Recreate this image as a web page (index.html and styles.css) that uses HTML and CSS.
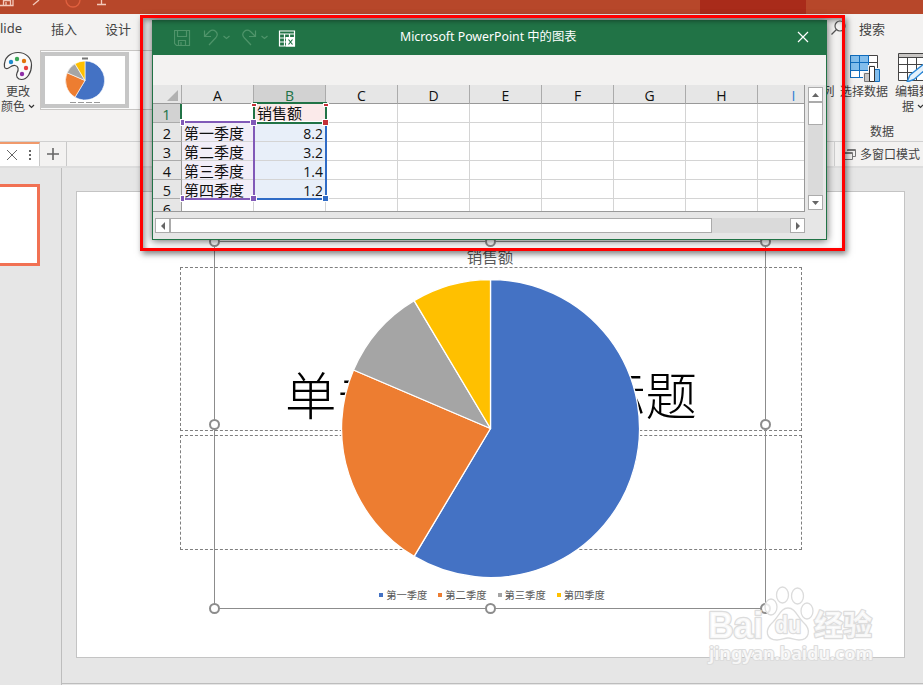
FILE: index.html
```html
<!DOCTYPE html>
<html lang="zh-CN">
<head>
    <meta charset="UTF-8">
    <meta name="viewport" content="width=device-width, initial-scale=1.0">
    <title>PowerPoint</title>
    <link rel="stylesheet" href="styles.css">
</head>
<body>

<div class="app">
    <header class="titlebar">
        <svg class="quick-icons" width="120" height="14" fill="none" stroke="#f3c9bb" stroke-width="1.3">
            <path d="M0 5.500H13V0M3.500 5V0.500H10.500V5M6 5V2"/>
            <path d="M33 5L39 0"/>
            <path d="M66 0A7 7 0 0 0 80 0" stroke="#e0603f"/>
            <path d="M97 4.500H106M101.500 0V4"/>
        </svg>
        <div class="tool-tab"></div>
    </header>

    <nav class="tabs">
        <span class="tab tab-slide">lide</span>
        <span class="tab">插入</span>
        <span class="tab">设计</span>
        <div class="search">
            <svg width="16" height="16" fill="none" stroke="#555" stroke-width="1.2"><circle cx="9" cy="6" r="5"/><path d="M5.500 9.500L0.500 14.500"/></svg>
            <span>搜索</span>
        </div>
    </nav>

    <section class="ribbon">
        <div class="tool tool-color">
            <svg width="30" height="30" viewBox="0 0 30 30">
                <path d="M1.500 16C0.500 6 8 1.500 15 1.500C23 1.500 28.500 7 28.500 14C28.500 22 24 28.500 18.500 28.500C14.500 28.500 12.500 25 14 22C16 18.500 15.500 15 12 14.500C8 14 7 17 4.500 17.500C3 17.700 1.700 17.300 1.500 16Z" fill="#fafafa" stroke="#444" stroke-width="1.2"/>
                <circle cx="8" cy="11" r="2.200" fill="#1e8bcd"/>
                <circle cx="14" cy="8" r="2.200" fill="#3aa655"/>
                <circle cx="21" cy="10" r="2.200" fill="#e2740c"/>
                <circle cx="23" cy="17" r="2.200" fill="#e84040"/>
                <circle cx="19" cy="23" r="2.200" fill="#9030a8"/>
            </svg>
            <span>更改</span>
            <span>颜色 <svg class="caret" width="7" height="5"><path d="M1 1L3.500 3.500L6 1" fill="none" stroke="#333" stroke-width="1.200"/></svg></span>
        </div>
        <div class="gallery">
            <div class="thumb">
                <svg width="80" height="49" viewBox="0 0 80 49">
                    <path d="M37 2.500H43" stroke="#777" stroke-width="2"/>
                    <g stroke="#fff" stroke-width="0.600">
                        <path d="M40 24.500V5A19.500 19.500 0 1 1 30 41.200Z" fill="#4472c4"/>
                        <path d="M40 24.500L30 41.200A19.500 19.500 0 0 1 22.100 16.800Z" fill="#ed7d31"/>
                        <path d="M40 24.500L22.100 16.800A19.500 19.500 0 0 1 30 7.800Z" fill="#a5a5a5"/>
                        <path d="M40 24.500L30 7.800A19.500 19.500 0 0 1 40 5Z" fill="#ffc000"/>
                    </g>
                    <path d="M25 46.500H55" stroke="#999" stroke-dasharray="6 2"/>
                </svg>
            </div>
        </div>
        <div class="data-group">
            <div class="data-tools">
                <div class="tool tool-row"><span>列</span></div>
                <div class="tool tool-select">
                    <svg width="30" height="29" viewBox="0 0 30 29">
                        <path d="M0.500 1.500H27.500V23.500H0.500Z" fill="#fff" stroke="#444"/>
                        <path d="M0.500 1.500H18.500V16.500H0.500Z" fill="#83beec"/>
                        <path d="M18.500 8.500H27.500M18.500 16.500H27.500" stroke="#444"/>
                        <path d="M0.500 23.500V1.500H18.500V16.500H0.500M9.500 1.500V23.500M0.500 8.500H18.500M0.500 23.500H14" fill="none" stroke="#0f6cbd"/>
                        <path d="M13 18H18V11H25V14H30V29H13Z" fill="#f3f2f1"/>
                        <path d="M14.500 19.500H19.500V27.500H14.500Z" fill="#c8c6c4" stroke="#777"/>
                        <path d="M24.500 15.500H29.500V27.500H24.500Z" fill="#83beec" stroke="#0f6cbd"/>
                        <path d="M19.500 12.500H24.500V27.500H19.500Z" fill="#fff" stroke="#333"/>
                    </svg>
                    <span>选择数据</span>
                </div>
                <div class="tool tool-edit">
                    <svg width="30" height="30" viewBox="0 0 30 30">
                        <path d="M0.500 1.500H31V28.500H0.500Z" fill="#fff" stroke="#444"/>
                        <path d="M1 2H31V5H1Z" fill="#c8c6c4"/>
                        <path d="M0 5.500H31M0 12.500H31M0 20.500H31M9.500 5V28M18.500 5V28" stroke="#444"/>
                        <path d="M32 7L12 23L9 30L16 27.500L35 11Z" fill="#e4f1fb" stroke="#2b88d8" stroke-width="1.400"/>
                    </svg>
                    <span>编辑数</span>
                    <span>据 <svg class="caret" width="7" height="5"><path d="M1 1L3.500 3.500L6 1" fill="none" stroke="#333" stroke-width="1.200"/></svg></span>
                </div>
            </div>
            <div class="group-label">数据</div>
        </div>
    </section>

    <div class="doc-tabs">
        <div class="doc-tab active">
            <svg width="34" height="14" fill="none" stroke="#666"><path d="M2 2L12 12M12 2L2 12"/><path d="M25 2V4M25 6V8M25 10V12" stroke-width="2"/></svg>
        </div>
        <div class="doc-tab add">
            <svg width="12" height="12"><path d="M0 6H12M6 0V12" stroke="#666" stroke-width="1.600"/></svg>
        </div>
        <div class="multi-window">
            <svg width="12" height="12" fill="none" stroke="#777"><path d="M3.500 3V1.500H11.500V8.500H9M3.500 2.500H11.500M0.500 4.500H8.500V11.500H0.500ZM0.500 5.500H8.500"/></svg>
            <span>多窗口模式</span>
        </div>
    </div>

    <main class="workspace">
        <aside class="slides">
            <div class="slide-thumb"></div>
        </aside>
        <div class="stage">
            <div class="slide">
                <div class="holder holder-title">单击此处添加标题</div>
                <div class="holder holder-sub"></div>
                <div class="chart">
                    <div class="chart-title">销售额</div>
                    <svg class="pie" width="300" height="300" viewBox="-150.500 -149.500 300 300">
                        <g stroke="#fff" stroke-width="1.300" stroke-linejoin="round">
                            <path d="M0 0V-149A149 149 0 1 1 -76.400 127.900Z" fill="#4472c4"/>
                            <path d="M0 0L-76.400 127.900A149 149 0 0 1 -137 -58.500Z" fill="#ed7d31"/>
                            <path d="M0 0L-137 -58.500A149 149 0 0 1 -76.400 -127.900Z" fill="#a5a5a5"/>
                            <path d="M0 0L-76.400 -127.900A149 149 0 0 1 0 -149Z" fill="#ffc000"/>
                        </g>
                    </svg>
                    <div class="legend">
                        <span class="key blue">第一季度</span>
                        <span class="key orange">第二季度</span>
                        <span class="key gray">第三季度</span>
                        <span class="key yellow">第四季度</span>
                    </div>
                    <i class="handle tl"></i><i class="handle tc"></i><i class="handle tr"></i>
                    <i class="handle ml"></i><i class="handle mr"></i>
                    <i class="handle bl"></i><i class="handle bc"></i><i class="handle br"></i>
                </div>
            </div>
        </div>
    </main>
</div>

<svg class="watermark" width="180" height="90" viewBox="0 0 180 90">
    <g fill="#fff" fill-opacity="0.800" stroke="#dcdcdc" stroke-width="1.300">
        <ellipse cx="65" cy="27" rx="6" ry="8"/>
        <ellipse cx="76.500" cy="15" rx="6" ry="8"/>
        <ellipse cx="91.500" cy="16" rx="6" ry="8"/>
        <ellipse cx="101" cy="31" rx="6" ry="8"/>
        <path d="M82 28C89 28 91 36 97 42C106 50 103 60 93 60C88 60 86 58 82 58C78 58 76 60 71 60C60 60 58 50 67 42C73 36 75 28 82 28Z"/>
        <g paint-order="stroke" stroke-width="2.500" stroke-linejoin="round">
            <text class="wm-latin" x="2" y="58" textLength="55" lengthAdjust="spacingAndGlyphs">Bai</text>
            <text class="wm-du" x="69" y="53" textLength="26" lengthAdjust="spacingAndGlyphs">du</text>
            <text class="wm-cjk" x="108" y="56" textLength="58" lengthAdjust="spacingAndGlyphs">经验</text>
            <text class="wm-url" x="3" y="80" textLength="164" lengthAdjust="spacingAndGlyphs">jingyan.baidu.com</text>
        </g>
    </g>
</svg>

<div class="sheet-window">
    <div class="sheet-title">
        <svg class="sheet-icons" width="124" height="20" fill="none" stroke="#4f946a" stroke-width="1.200">
            <path d="M0.500 2.500H15.500V17.500H2.500L0.500 15.500ZM3.500 3V8.500H12.500V3M4.500 17V12.500H11.500V17M7 17V14"/>
            <path d="M30.500 2.500V8.500H37M31 8L35.500 3.500C40 0 45.500 5 42 9.500L35 17M49.500 8L52.500 10.500L55.500 8"/>
            <path d="M81.500 2.500V8.500H75M81 8L76.500 3.500C72 0 66.500 5 70 9.500L77 17M87.500 8L90.500 10.500L93.500 8"/>
            <g stroke="#fff">
                <path d="M105.500 3H120.500V18H105.500ZM105.500 6H120.500M105.500 10H112M105.500 14H112M110.500 6V18M115.500 6V9"/>
                <path d="M112 9H121V18.500H112Z" fill="#fff" stroke="none"/>
                <path d="M114.500 11.500L118.500 16.500M118.500 11.500L114.500 16.500" stroke="#217346"/>
            </g>
        </svg>
        <span class="sheet-name">Microsoft PowerPoint 中的图表</span>
        <svg class="close" width="12" height="12"><path d="M1 1L11 11M11 1L1 11" stroke="#fff" stroke-width="1.200"/></svg>
    </div>
    <div class="sheet-bar"></div>
    <div class="sheet-body">
        <div class="grid">
            <div class="cell head corner"></div>
            <div class="cell head">A</div><div class="cell head on">B</div><div class="cell head">C</div><div class="cell head">D</div><div class="cell head">E</div><div class="cell head">F</div><div class="cell head">G</div><div class="cell head">H</div><div class="cell head next">I</div>

            <div class="cell num on">1</div>
            <div class="cell"></div><div class="cell name">销售额</div><div class="cell"></div><div class="cell"></div><div class="cell"></div><div class="cell"></div><div class="cell"></div><div class="cell"></div><div class="cell"></div>

            <div class="cell num">2</div>
            <div class="cell cat">第一季度</div><div class="cell val">8.2</div><div class="cell"></div><div class="cell"></div><div class="cell"></div><div class="cell"></div><div class="cell"></div><div class="cell"></div><div class="cell"></div>

            <div class="cell num">3</div>
            <div class="cell cat">第二季度</div><div class="cell val">3.2</div><div class="cell"></div><div class="cell"></div><div class="cell"></div><div class="cell"></div><div class="cell"></div><div class="cell"></div><div class="cell"></div>

            <div class="cell num">4</div>
            <div class="cell cat">第三季度</div><div class="cell val">1.4</div><div class="cell"></div><div class="cell"></div><div class="cell"></div><div class="cell"></div><div class="cell"></div><div class="cell"></div><div class="cell"></div>

            <div class="cell num">5</div>
            <div class="cell cat">第四季度</div><div class="cell val">1.2</div><div class="cell"></div><div class="cell"></div><div class="cell"></div><div class="cell"></div><div class="cell"></div><div class="cell"></div><div class="cell"></div>

            <div class="cell num">6</div>
            <div class="cell"></div><div class="cell"></div><div class="cell"></div><div class="cell"></div><div class="cell"></div><div class="cell"></div><div class="cell"></div><div class="cell"></div><div class="cell"></div>

            <!-- range outlines: categories, series name, values -->
            <svg class="ranges" width="180" height="120" shape-rendering="crispEdges">
                <path d="M29 37H101V114H29" fill="none" stroke="#8159b8" stroke-width="2"/>
                <path d="M102 114H173V38" fill="none" stroke="#2f6bc6" stroke-width="2"/>
                <path d="M100 18H174M101 17V38M173 17V38M100 38H174" fill="none" stroke="#217346" stroke-width="2"/>
                <path d="M104 36.500H170" stroke="#fff"/>
                <g fill="#c43038" stroke="#fff">
                    <path d="M98.500 18.500H103.500V21.500H98.500ZM170.500 18.500H175.500V21.500H170.500ZM169.500 34.500H175.500V40.500H169.500Z"/>
                </g>
                <g fill="#8159b8" stroke="#fff">
                    <path d="M97.500 34.500H103.500V40.500H97.500ZM97.500 110.500H103.500V116.500H97.500ZM27.500 34.500H31.500V40.500H27.500ZM27.500 110.500H31.500V116.500H27.500Z"/>
                </g>
                <path d="M169.500 110.500H175.500V116.500H169.500Z" fill="#2f6bc6" stroke="#fff"/>
            </svg>
        </div>
        <div class="vscroll">
            <div class="arrow"><svg width="7" height="4"><path d="M0 4L3.500 0L7 4Z" fill="#666"/></svg></div>
            <div class="bar"></div>
            <div class="arrow"><svg width="7" height="4"><path d="M0 0L3.500 4L7 0Z" fill="#666"/></svg></div>
        </div>
    </div>
    <div class="hscroll">
        <div class="arrow"><svg width="4" height="8"><path d="M4 0L0 4L4 8Z" fill="#666"/></svg></div>
        <div class="bar"></div>
        <div class="arrow"><svg width="4" height="8"><path d="M0 0L4 4L0 8Z" fill="#666"/></svg></div>
    </div>
</div>

<div class="highlight"></div>

</body>
</html>
```
FILE: styles.css
```css
* {
    box-sizing: border-box;
}
body {
    margin: 0;
    width: 923px;
    height: 685px;
    overflow: hidden;
    position: relative;
    background-color: #e6e6e6;
    color: #444;
    font-family: "Noto Sans", "Noto Sans CJK SC", sans-serif;
    font-size: 13px;
}
svg {
    display: block;
    flex: none;
}
.app {
    display: flex;
    flex-direction: column;
    height: 685px;
}
.titlebar {
    display: flex;
    height: 14px;
    background-color: #b7472a;
}
.tool-tab {
    width: 106px;
    margin-left: 580px;
    background-color: #a92b1a;
}
.tabs {
    display: flex;
    align-items: center;
    height: 28px;
    background-color: #f3f2f1;
    white-space: nowrap;
}
.tab {
    width: 54px;
    padding-left: 1px;
}
.tab-slide {
    width: 50px;
    padding-left: 0;
    font-size: 13px;
}
.search {
    display: flex;
    align-items: center;
    gap: 12px;
    margin-left: 673px;
}
.ribbon {
    display: flex;
    height: 99px;
    background-color: #f3f2f1;
    overflow: hidden;
}
.tool {
    display: flex;
    flex: none;
    flex-direction: column;
    align-items: center;
    font-size: 12px;
    line-height: 15px;
    white-space: nowrap;
}
.tool-color {
    width: 36px;
    padding-top: 9px;
}
.tool-color span:first-of-type {
    margin-top: 3px;
}
.caret {
    display: inline-block;
    vertical-align: 2px;
}
.gallery {
    flex: none;
    width: 120px;
    height: 60px;
    margin: 8px 0 0 4px;
    border: 1px solid #c8c6c4;
    background-color: #fafafa;
}
.thumb {
    width: 88px;
    height: 56px;
    margin-top: 1px;
    border: 4px solid #c6c6c6;
    background-color: #fff;
}
.data-group {
    flex: none;
    margin-left: 662px;
    width: 120px;
}
.data-tools {
    display: flex;
    height: 81px;
}
.tool-row {
    width: 13px;
    padding-top: 42px;
}
.tool-select {
    width: 57px;
    padding: 12px 2px 0 3px;
}
.tool-edit {
    width: 42px;
    padding-top: 10px;
}
.tool-select svg {
    margin-left: 2px;
}
.tool-select span {
    margin-top: 1px;
}
.tool-edit span:first-of-type {
    margin-top: 2px;
}
.group-label {
    padding-left: 48px;
    font-size: 12px;
    line-height: 18px;
}
.doc-tabs {
    display: flex;
    height: 27px;
    background-color: #f3f2f1;
    border-top: 1px solid #d0d0d0;
    border-bottom: 2px solid #ddd;
}
.doc-tab {
    display: flex;
    align-items: center;
    justify-content: center;
    width: 27px;
    border-right: 1px solid #c8c8c8;
}
.doc-tab.active {
    width: 40px;
    justify-content: flex-end;
    background-color: #fff;
    border-top: 2px solid #f0996b;
}
.multi-window {
    display: flex;
    align-items: center;
    gap: 4px;
    margin-left: 767px;
    padding-left: 9px;
    border-left: 1px solid #d0d0d0;
    font-size: 12px;
    white-space: nowrap;
}
.workspace {
    display: flex;
    flex: 1;
}
.slides {
    width: 62px;
    padding-top: 16px;
    border-right: 1px solid #bdbdbd;
}
.slide-thumb {
    width: 40px;
    height: 82px;
    border: 3px solid #f17153;
    border-left: none;
    background-color: #fff;
}
.stage {
    flex: 1;
    height: 516px;
    padding: 23px 0 0 14px;
    border-bottom: 1px solid #bdbdbd;
}
.slide {
    position: relative;
    width: 829px;
    height: 467px;
    border: 1px solid #c4c4c4;
    background-color: #fff;
}
.holder {
    position: absolute;
    left: 103px;
    width: 622px;
    border: 1px dashed #7f7f7f;
}
.holder-title {
    top: 75px;
    height: 164px;
    padding-top: 87px;
    color: #000;
    font-family: "Noto Sans CJK SC", sans-serif;
    font-size: 51.500px;
    font-weight: 200;
    line-height: 76px;
    text-align: center;
}
.holder-sub {
    top: 243px;
    height: 115px;
}
.chart {
    position: absolute;
    left: 137px;
    top: 49px;
    width: 552px;
    height: 368px;
    border: 1px solid #8c8c8c;
    display: flex;
    flex-direction: column;
    align-items: center;
}
.chart-title {
    margin-top: 4px;
    height: 23px;
    color: #595959;
    font-size: 15.500px;
    line-height: 22px;
}
.pie {
    margin-top: 10px;
}
.legend {
    display: flex;
    gap: 11px;
    margin-top: 8px;
    color: #595959;
    font-size: 10.300px;
    line-height: 16px;
    padding-left: 4px;
}
.key {
    display: flex;
    align-items: center;
    gap: 3px;
    white-space: nowrap;
}
.key::before {
    content: "";
    width: 4px;
    height: 4px;
}
.blue::before { background-color: #4472c4; }
.orange::before { background-color: #ed7d31; }
.gray::before { background-color: #a5a5a5; }
.yellow::before { background-color: #ffc000; }
.handle {
    position: absolute;
    width: 11px;
    height: 11px;
    border: 2px solid #8c8c8c;
    border-radius: 50%;
    background-color: #fff;
}
.tl, .ml, .bl { left: -6px; }
.tc, .bc { left: 270px; }
.tr, .mr, .br { right: -6px; }
.tl, .tc, .tr { top: -6px; }
.ml, .mr { top: 177px; }
.bl, .bc, .br { bottom: -6px; }

.watermark {
    position: absolute;
    left: 706px;
    top: 580px;
}
.wm-latin, .wm-du {
    font: bold 36px "Liberation Sans", sans-serif;
}
.wm-du {
    font-size: 23px;
}
.wm-cjk {
    font: bold 29px "Noto Sans CJK SC", sans-serif;
}
.wm-url {
    font: 600 17px "Noto Sans", sans-serif;
    stroke-width: 2px;
}

.sheet-window {
    position: absolute;
    left: 152px;
    top: 20px;
    width: 675px;
    height: 220px;
    border: 1px solid #217346;
    background-color: #e6e6e6;
    box-shadow: 0 1px 8px rgba(0, 0, 0, 0.6);
}
.sheet-title {
    display: flex;
    align-items: center;
    height: 34px;
    padding-left: 21px;
    background-color: #217346;
    color: #fff;
    font-size: 12.300px;
}
.sheet-name {
    width: 180px;
    margin: -5px 0 0 102px;
    white-space: nowrap;
}
.close {
    margin: -2px 0 0 217px;
}
.sheet-bar {
    height: 30px;
    background-color: #f3f2f1;
}
.sheet-body {
    display: flex;
    gap: 3px;
    height: 127px;
}
.grid {
    position: relative;
    display: grid;
    grid-template-columns: 29px repeat(9, 72px);
    grid-template-rows: 19px repeat(6, 19px);
    width: 652px;
    height: 127px;
    overflow: hidden;
    border-right: 1px solid #999;
    border-bottom: 1px solid #999;
}
.cell {
    border-right: 1px solid #d4d4d4;
    border-bottom: 1px solid #d4d4d4;
    background-color: #fff;
    color: #111;
    font-family: "Noto Sans", "Noto Sans CJK SC", sans-serif;
    font-size: 15px;
    line-height: 20px;
    white-space: nowrap;
    overflow: hidden;
}
.head, .num {
    background-color: #e6e6e6;
    border-color: #ababab;
    font-family: "Open Sans", sans-serif;
    text-align: center;
}
.head {
    border-bottom-color: #999;
    font-size: 14px;
    line-height: 21px;
}
.num {
    border-right-color: #999;
    font-size: 14.500px;
    line-height: 21px;
}
.head.on, .num.on {
    background-color: #d2d2d2;
    color: #217346;
}
.head.next {
    color: #2b7cd3;
}
.num.on {
    border-right: 2px solid #217346;
}
.corner::after {
    content: "";
    display: block;
    margin: 5px 0 0 14px;
    border-left: 11px solid transparent;
    border-bottom: 11px solid #b1b1b1;
    width: 0;
}
.name {
    padding-left: 3px;
    background-color: #fbeaea;
    line-height: 19px;
}
.cat {
    padding-left: 2px;
    background-color: #f2eef8;
}
.val {
    padding-right: 2px;
    background-color: #e8eff9;
    font-family: "Open Sans", sans-serif;
    font-size: 14px;
    line-height: 21px;
    text-align: right;
}
.ranges {
    position: absolute;
    left: 0;
    top: 0;
}
.arrow {
    display: flex;
    align-items: center;
    justify-content: center;
    flex: none;
    width: 15px;
    height: 15px;
    border: 1px solid #ababab;
    background-color: #fff;
}
.vscroll {
    display: flex;
    flex-direction: column;
    justify-content: space-between;
    width: 15px;
    height: 123px;
    margin-top: 2px;
    background-color: #dadada;
}
.vscroll .bar {
    height: 23px;
    margin-bottom: 70px;
    border: 1px solid #ababab;
    background-color: #fff;
}
.hscroll {
    display: flex;
    width: 650px;
    height: 15px;
    margin: 6px 0 0 2px;
    background-color: #dadada;
}
.hscroll .bar {
    width: 542px;
    margin-right: 78px;
    border: 1px solid #ababab;
    background-color: #fff;
}

.highlight {
    position: absolute;
    left: 140px;
    top: 15px;
    width: 705px;
    height: 236px;
    border: 3px solid #f00;
    box-shadow: 2px 3px 6px rgba(0, 0, 0, 0.5), inset 2px 3px 5px rgba(0, 0, 0, 0.4);
}
```
